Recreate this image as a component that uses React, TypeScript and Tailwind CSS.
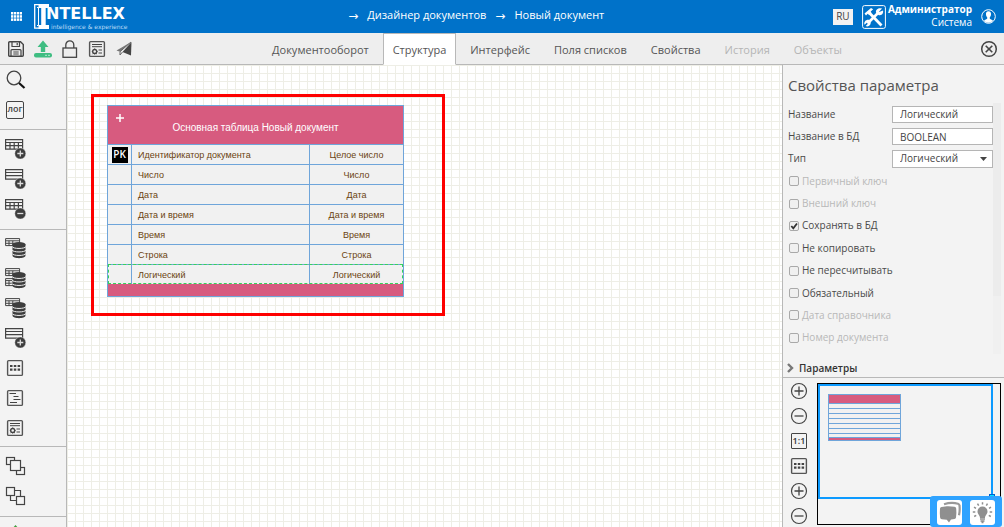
import React from 'react';

type IconProps = { className?: string; children: React.ReactNode; size?: number };

const Icon: React.FC<IconProps> = ({ className = '', children, size = 24 }) => (
  <svg
    width={size}
    height={size}
    viewBox={`0 0 ${size} ${size}`}
    fill="none"
    stroke="#444"
    strokeWidth="1.2"
    className={`block shrink-0 ${className}`}
    aria-hidden="true"
  >
    {children}
  </svg>
);

const IconButton: React.FC<{ label: string; className?: string; children: React.ReactNode }> = ({
  label,
  className = '',
  children,
}) => (
  <button type="button" aria-label={label} className={`flex items-center justify-center ${className}`}>
    {children}
  </button>
);

const SaveIcon = () => (
  <Icon size={18}>
    <path d="M1.7 2.7q0-1 1-1h10.8l2.8 2.8v10.8q0 1-1 1H2.7q-1 0-1-1z" strokeWidth="1.4" />
    <path d="M5 2v4.5h7.5V2M10.2 3v2.3M4 16v-5.5q0-.9.9-.9h8.2q.9 0 .9.9V16M6.3 12h5.4M6.3 14h5.4" />
  </Icon>
);

const UploadIcon = () => (
  <Icon size={18}>
    <path d="M9 .5 14.5 7h-3.3v5H6.8V7H3.5z" fill="#3fbd82" stroke="none" />
    <rect x="0" y="13" width="18" height="4.5" rx="2" fill="#3fbd82" stroke="none" />
    <path d="M11.5 15.3h1M14.5 15.3h1" stroke="#fff" />
  </Icon>
);

const LockIcon = () => (
  <Icon size={18}>
    <rect x="2" y="8" width="13.5" height="9.3" strokeWidth="1.3" />
    <path d="M4.8 8V5a4 4.2 0 0 1 8 0v3" strokeWidth="1.3" />
  </Icon>
);

const ReportIcon = () => (
  <Icon size={18}>
    <rect x="1.6" y="1.6" width="14.8" height="14.8" rx="1" stroke="#555" strokeWidth="1.4" />
    <path d="M4 4.5h10M4 6.7h10M10.5 10H14M10.5 13H14" strokeWidth="1" />
    <circle cx="6.7" cy="11.5" r="2" strokeWidth="1.4" />
    <path d="M3.8 11.5h1M8.6 11.5h1M6.7 8.5v1M6.7 13.5v1M4.5 14.2l.9-.9M9 14.2l-.9-.9" strokeWidth="1" />
  </Icon>
);

const SendIcon = () => (
  <Icon size={18}>
    <path d="M16 2 1.5 10.500l3.500 1.200z" fill="#777" stroke="none" />
    <path d="M16.500 2 7.500 12l8.500 3.500z" fill="#444" stroke="none" />
    <path d="M16 2 5 11.700V15l2.500-3" stroke="#666" strokeWidth="1" />
  </Icon>
);

const SearchIcon = () => (
  <Icon size={22}>
    <circle cx="10" cy="9" r="6.8" strokeWidth="1.3" />
    <path d="m15 14 5.500 5" stroke="#111" strokeWidth="2.2" />
  </Icon>
);

const TableIcon: React.FC<{ columns?: boolean; minus?: boolean }> = ({ columns, minus }) => (
  <Icon size={22}>
    <path d="M1.6 1.6h17v9.500h-17zM1.6 4.500h17M1.6 7.600h17" strokeWidth="1.2" />
    {columns && <path d="M6 4.500V11M10.200 4.500V11M14.400 4.500V11" strokeWidth="1.2" />}
    <circle cx="16.3" cy="15.5" r="5.500" fill="#3d3d3d" stroke="#f3f3f3" strokeWidth=".4" />
    <path d={minus ? 'M13.300 15.500h6' : 'M13.300 15.500h6M16.300 12.500v6'} stroke="#ddd" strokeWidth="1.3" />
  </Icon>
);

const DatabaseIcon: React.FC<{ double?: boolean }> = ({ double }) => (
  <Icon size={22}>
    <path d="M1.6 1.6h14v7h-14zM1.6 3.800h14M1.6 6.300h14M5 3.800v5M8.800 3.800v5" strokeWidth="1" />
    {double && <path d="M1.6 11.600h8v7h-8zM1.6 13.600h8M1.6 16.200h8M5 13.600v5" strokeWidth="1" />}
    <path d="M8.500 7.500v11c0 3.500 13 3.500 13 0v-11z" fill="#3d3d3d" stroke="none" />
    <ellipse cx="15" cy="7.500" rx="6.500" ry="2.500" fill="#3d3d3d" stroke="none" />
    <path
      d="M8 9.500c1 2.600 13 2.600 14 0M8 13c1 2.600 13 2.600 14 0M8 16.500c1 2.600 13 2.600 14 0"
      stroke="#ececec"
      strokeWidth="1"
    />
  </Icon>
);

const DotsIcon = () => (
  <Icon size={18}>
    <rect x="1.6" y="1.6" width="14.8" height="14.8" rx="1" stroke="#555" strokeWidth="1.4" />
    <path d="M4 7h2.500M7.800 7h2.500M11.600 7h2.500M4 10.700h2.500M7.800 10.700h2.500M11.600 10.700h2.500" strokeWidth="2.2" />
  </Icon>
);

const TreeIcon = () => (
  <Icon size={18}>
    <rect x="1.6" y="1.6" width="14.8" height="14.8" rx="1" stroke="#555" strokeWidth="1.4" />
    <path d="M3.500 4.500H10M7.500 7.500h5M7.500 10.500h7M4 13.500h7" />
  </Icon>
);

const FrontIcon = () => (
  <Icon size={22}>
    <rect x="2.5" y="2.5" width="8" height="7" />
    <rect x="12.5" y="12.5" width="8" height="7" />
    <rect x="6.5" y="5.5" width="10" height="10" fill="#f3f3f3" />
  </Icon>
);

const BackIcon = () => (
  <Icon size={22}>
    <path d="M10.500 5.500h6v6M6.500 11v4.500h6" />
    <rect x="2.5" y="2.5" width="8" height="8" />
    <rect x="12.5" y="11.5" width="8" height="8" />
  </Icon>
);

const ZoomIcon: React.FC<{ minus?: boolean }> = ({ minus }) => (
  <Icon size={18}>
    <circle cx="9" cy="9" r="7.5" />
    <path d={minus ? 'M4.500 9h9' : 'M4.500 9h9M9 4.500v9'} strokeWidth="1.3" />
  </Icon>
);

const breadcrumbs = ['Дизайнер документов', 'Новый документ'];

const tabs = [
  { title: 'Документооборот' },
  { title: 'Структура', active: true },
  { title: 'Интерфейс' },
  { title: 'Поля списков' },
  { title: 'Свойства' },
  { title: 'История', disabled: true },
  { title: 'Объекты', disabled: true },
];

const fields = [
  { name: 'Идентификатор документа', type: 'Целое число', pk: true },
  { name: 'Число', type: 'Число' },
  { name: 'Дата', type: 'Дата' },
  { name: 'Дата и время', type: 'Дата и время' },
  { name: 'Время', type: 'Время' },
  { name: 'Строка', type: 'Строка' },
  { name: 'Логический', type: 'Логический', selected: true },
];

const flags = [
  { title: 'Первичный ключ', disabled: true },
  { title: 'Внешний ключ', disabled: true },
  { title: 'Сохранять в БД', checked: true },
  { title: 'Не копировать' },
  { title: 'Не пересчитывать' },
  { title: 'Обязательный' },
  { title: 'Дата справочника', disabled: true },
  { title: 'Номер документа', disabled: true },
];

const Logo = () => (
  <a href="#" className="flex items-center text-white">
    <svg width="16" height="25" viewBox="0 0 16 25" fill="none" aria-hidden="true">
      <path d="M5 .7H.7v23.500H5" stroke="#fff" strokeWidth="1.3" />
      <path d="M3 3.500h1.500v18H3" stroke="#fff" strokeWidth="1" />
      <path d="M4.500 0H15v4h-3.300v17H15v4H4.500v-4h2.700V4H4.500z" fill="#fff" />
    </svg>
    <span className="flex flex-col items-end pt-px font-['DejaVu_Sans',sans-serif]">
      <span className="-ml-1 self-start text-[16px] leading-[18px] font-bold">NTELLEX</span>
      <span className="pl-px text-[6px] leading-[7px] text-[#b9daf5]">intelligence &amp; experience</span>
    </span>
  </a>
);

const Header = () => (
  <header className="flex h-[33px] shrink-0 items-center bg-[#0072c9] pr-2 text-white">
    <IconButton label="Меню" className="mr-3 ml-[11px]">
      <svg width="11" height="9" viewBox="0 0 11 9" fill="#fff">
        {[0, 3.2, 6.4].map((y) =>
          [0, 2.9, 5.8, 8.7].map((x) => <rect key={`${x}-${y}`} x={x} y={y} width="2.3" height="2.5" />),
        )}
      </svg>
    </IconButton>
    <Logo />
    <nav className="flex flex-1 items-center justify-center gap-[9px] pr-2 pb-[2px] text-[11px] font-medium">
      {breadcrumbs.map((item) => (
        <React.Fragment key={item}>
          <span className="font-['DejaVu_Sans'] text-[12px]">→</span>
          <a href="#">{item}</a>
        </React.Fragment>
      ))}
    </nav>
    <button type="button" className="mr-[9px] h-4 w-5 bg-[#f2f2f2] pb-[2px] text-[10px] leading-[12px] text-[#444]">
      RU
    </button>
    <IconButton label="Настройки" className="mr-[2px]">
      <svg width="24" height="24" viewBox="0 0 24 24" fill="none" stroke="#fff">
        <rect x=".6" y=".6" width="22.8" height="22.8" rx="2" />
        <path d="m7 7.500 12.500 13" strokeWidth="2.8" />
        <path d="M2.500 8.500 9 3l2.200 1.200-2.500 2.300.8 1.500-2.300 2-1.500-1.300-1.700 1.800z" fill="#fff" stroke="none" />
        <path d="M5.500 18.500 17 7" strokeWidth="2.6" />
        <path d="M20 3.500 17 6.800l.2.300L21 5.500c.8 3-1.500 5.500-4.500 4.500L14 7.500C13.500 4.500 16.500 2.500 20 3.500z" fill="#fff" stroke="none" />
        <path d="M8.500 16.500c1 3.500-2 5.800-4.800 4.600l2.400-2.600-1-1-2.600 2.200c-1-3 2-5.700 5-4.600z" fill="#fff" stroke="none" />
      </svg>
    </IconButton>
    <div className="mr-[9px] pb-[2px] text-right text-[10px] leading-[13px]">
      <div className="font-bold">Администратор</div>
      <div>Система</div>
    </div>
    <IconButton label="Профиль">
      <svg width="15" height="15" viewBox="0 0 15 15" fill="none">
        <circle cx="7.5" cy="7.5" r="6.8" stroke="#fff" />
        <path d="M7.500 2.300c2 0 2.700 1.300 2.500 3.200-.1 1.400-.7 2.200-1.200 2.800v1.500l3.200 1.700c-2.300 3-6.800 3-9 0l3.200-1.700V8.300C5.600 7.700 5.100 6.900 5 5.500c-.2-1.900.5-3.200 2.500-3.200z" fill="#fff" />
      </svg>
    </IconButton>
  </header>
);

const Toolbar = () => (
  <div className="flex h-8 shrink-0 items-stretch border-b border-[#b8b8b8] bg-[#eee] pr-[6px] pl-[7px]">
    <div className="flex items-center gap-[9px] pt-px">
      <IconButton label="Сохранить"><SaveIcon /></IconButton>
      <IconButton label="Выгрузить"><UploadIcon /></IconButton>
      <IconButton label="Блокировка"><LockIcon /></IconButton>
      <IconButton label="Отчёт"><ReportIcon /></IconButton>
      <IconButton label="Отправить"><SendIcon /></IconButton>
    </div>
    <nav className="-mb-px flex flex-1 justify-center gap-1 pl-px">
      {tabs.map((tab) => (
        <button
          key={tab.title}
          type="button"
          disabled={tab.disabled}
          className={`border px-[9px] pt-[2px] text-[11px] ${
            tab.active
              ? 'border-[#b8b8b8] border-b-white bg-white text-[#555]'
              : tab.disabled
                ? 'border-transparent text-[#b5b5b5]'
                : 'border-transparent text-[#555]'
          }`}
        >
          {tab.title}
        </button>
      ))}
    </nav>
    <IconButton label="Закрыть">
      <Icon size={18}>
        <circle cx="9" cy="9" r="7.3" strokeWidth="1.5" />
        <path d="m5.700 5.700 6.600 6.600M12.300 5.700l-6.600 6.600" strokeWidth="1.6" />
      </Icon>
    </IconButton>
  </div>
);

const Tool: React.FC<{ label: string; children: React.ReactNode }> = ({ label, children }) => (
  <IconButton label={label} className="h-[30px] w-[30px] shrink-0">
    {children}
  </IconButton>
);

const Sidebar = () => (
  <aside className="flex w-[67px] shrink-0 flex-col overflow-hidden border-r border-[#b8b8b8] bg-[#f3f3f3] *:shrink-0">
    <div className="border-b border-[#b8b8b8] pb-1">
      <Tool label="Поиск"><SearchIcon /></Tool>
      <button type="button" className="flex h-[30px] w-[30px] items-center justify-center">
        <span className="flex h-[18px] w-[18px] justify-center rounded-[2px] border border-[#444] text-[9px] leading-[14px] font-semibold text-[#444]">
          лог
        </span>
      </button>
    </div>
    <div className="border-b border-[#b8b8b8] pt-1 pb-[5px]">
      <Tool label="Добавить таблицу"><TableIcon columns /></Tool>
      <Tool label="Добавить строку"><TableIcon /></Tool>
      <Tool label="Удалить таблицу"><TableIcon columns minus /></Tool>
    </div>
    <div className="border-b border-[#b8b8b8] py-[3px]">
      <Tool label="База данных"><DatabaseIcon /></Tool>
      <Tool label="Базы данных"><DatabaseIcon double /></Tool>
      <Tool label="Таблица базы"><DatabaseIcon /></Tool>
      <Tool label="Добавить поле"><TableIcon /></Tool>
      <Tool label="Сетка"><DotsIcon /></Tool>
      <Tool label="Дерево"><TreeIcon /></Tool>
      <Tool label="Шаблон"><ReportIcon /></Tool>
    </div>
    <div className="border-b border-[#b8b8b8] pt-1 pb-[5px]">
      <Tool label="На передний план"><FrontIcon /></Tool>
      <Tool label="На задний план"><BackIcon /></Tool>
    </div>
    <div className="pt-2 pl-[11px]">
      <svg width="9" height="9" viewBox="0 0 9 9" aria-hidden="true">
        <path d="M4.500 0 9 5H0z" fill="#3f9d3f" />
      </svg>
    </div>
  </aside>
);

const DocumentTable = () => (
  <div className="absolute top-[40px] left-[40px] w-[297px] border border-[#6fa5da] bg-[#d75b7f] font-['Liberation_Sans',sans-serif]">
    <div className="flex h-[38px] px-2 pt-[6px] text-white">
      <IconButton label="Добавить поле" className="h-3 w-2">
        <svg width="8" height="8" viewBox="0 0 8 8" stroke="#fff" strokeWidth="1.5">
          <path d="M0 4h8M4 0v8" />
        </svg>
      </IconButton>
      <h2 className="flex-1 pt-[10px] pr-2 text-center text-[10px] leading-3">Основная таблица Новый документ</h2>
    </div>
    <table className="w-full table-fixed border-separate border-spacing-0 bg-[#f1f1f1] text-[9px] text-[#6b4310]">
      <colgroup>
        <col className="w-[23px]" />
        <col />
        <col className="w-[94px]" />
      </colgroup>
      <tbody>
        {fields.map((field) => (
          <tr
            key={field.name}
            className={`h-5 ${field.selected ? 'outline-1 -outline-offset-1 outline-[#35d35b] outline-dashed' : ''}`}
          >
            <td className="border-t border-[#6fa5da] p-0">
              {field.pk && (
                <span className="mx-auto block h-4 w-4 bg-black text-center font-['Open_Sans',sans-serif] text-[10px] leading-[15px] font-semibold text-white">
                  PK
                </span>
              )}
            </td>
            <td className="border-t border-l border-[#6fa5da] p-0 pt-[2px] pl-[6px]">{field.name}</td>
            <td className="border-t border-l border-[#6fa5da] p-0 pt-[2px] text-center">{field.type}</td>
          </tr>
        ))}
      </tbody>
    </table>
    <div className="h-3" />
  </div>
);

const Canvas = () => (
  <main className="relative min-w-0 flex-1 overflow-hidden bg-white bg-[linear-gradient(to_right,#eeeee6_1px,transparent_1px),linear-gradient(to_bottom,#eeeee6_1px,transparent_1px)] bg-[size:8px_8px]">
    <DocumentTable />
    <div className="pointer-events-none absolute top-[29px] left-[24px] h-[222px] w-[354px] border-[3px] border-[#fe0000]" />
  </main>
);

const inputClass = 'w-[101px] border border-[#b5b5b5] bg-white px-[7px] text-[10px] text-[#444]';

const PropertiesForm = () => (
  <form className="flex min-h-0 flex-1 pb-1 pl-[5px]">
    <div className="flex flex-1 flex-col pb-[5px] text-[10px] text-[#4a4a4a] *:flex-1">
      <div className="flex items-center justify-between">
        <label htmlFor="title">Название</label>
        <input id="title" defaultValue="Логический" className={`h-[17px] ${inputClass}`} />
      </div>
      <div className="flex items-center justify-between">
        <label htmlFor="column">Название в БД</label>
        <input id="column" defaultValue="BOOLEAN" className={`h-[17px] ${inputClass}`} />
      </div>
      <div className="flex items-center justify-between">
        <label htmlFor="type">Тип</label>
        <div className="relative">
          <select id="type" className={`block h-[18px] appearance-none ${inputClass}`}>
            <option>Логический</option>
          </select>
          <svg width="7" height="4" viewBox="0 0 7 4" className="pointer-events-none absolute top-[7px] right-[6px]">
            <path d="M0 0h7L3.500 4z" fill="#444" />
          </svg>
        </div>
      </div>
      {flags.map((flag) => (
        <label key={flag.title} className={`flex items-center gap-[3px] pl-px ${flag.disabled ? 'text-[#b8b8b8]' : ''}`}>
          <span className="relative">
            <input
              type="checkbox"
              defaultChecked={flag.checked}
              disabled={flag.disabled}
              className="peer block h-[10px] w-[10px] appearance-none rounded-[2px] border border-[#a9a9a9] bg-[#f0f0f0]"
            />
            <svg
              width="10"
              height="10"
              viewBox="0 0 10 10"
              fill="none"
              className="pointer-events-none absolute inset-0 hidden peer-checked:block"
            >
              <path d="M2.300 5 4.300 7.300 8 2.500" stroke="#333" strokeWidth="1.8" />
            </svg>
          </span>
          {flag.title}
        </label>
      ))}
    </div>
    <div className="mr-[3px] w-2 bg-[#f0f0f0]">
      <div className="h-[193px] bg-[#ececec]" />
    </div>
  </form>
);

const Minimap = () => (
  <div className="relative h-[142px] flex-1 border border-black">
    <div className="mr-[7px] h-[115px] border-2 border-[#0c9aff] pt-2 pl-2">
      <div className="h-[47px] w-[73px] border border-[#6fa5da] bg-[#f1f1f1]">
        <div className="h-[8px] bg-[#d75b7f]" />
        {fields.map((field) => (
          <div key={field.name} className="h-[5px] border-t border-[#6fa5da]" />
        ))}
        <div className="-mt-px h-[3px] border-t border-[#6fa5da] bg-[#d75b7f]" />
      </div>
    </div>
    <span className="absolute top-[110px] right-[5px] h-[6px] w-[6px] border border-[#0060d0] bg-[#00e5ff]" />
  </div>
);

const HelpWidget = () => (
  <div className="fixed right-[2px] bottom-0 flex h-[31px] w-[72px] items-start justify-center gap-2 rounded-[3px] bg-[#2fa3ff] pt-1">
    <IconButton label="Сообщения" className="h-[25px] w-[25px] rounded-[3px] bg-white">
      <svg width="23" height="23" viewBox="0 0 23 23" aria-hidden="true">
        <path d="M6 3.200c5-1.500 10-1.500 14-.5q1.500.5 1.500 2c.5 4 .3 6-.5 9.500" fill="none" stroke="#999" strokeWidth="2.2" />
        <path d="M3.500 6c5-1 8-1 13-.2q1.500.2 1.700 1.700.5 4.500-.2 9-.2 1.200-1.500 1.500l-3.500.6-2 2.900-2.200-2.700-5-.6q-1.500-.2-1.700-1.700-.5-4.500-.1-9Q2.200 6.200 3.500 6z" fill="#8f8f8f" />
      </svg>
    </IconButton>
    <IconButton label="Подсказки" className="h-[25px] w-[25px] rounded-[3px] bg-white">
      <svg width="23" height="23" viewBox="0 0 23 23" aria-hidden="true">
        <path d="M11.500 5.500a5 5 0 0 1 5 5c0 3-2.500 3.500-2.500 6.500H9c0-3-2.500-3.500-2.500-6.500a5 5 0 0 1 5-5z" fill="#8f8f8f" />
        <path d="M9 18h5M9.500 20h4M10.500 21.500h2" stroke="#8f8f8f" strokeWidth="1.3" />
        <path
          d="M11.500 1.200v2.300M6.500 2.600l1.200 2M16.500 2.600l-1.200 2M3 6.200l2 1.200M20 6.200l-2 1.200M1.800 11h2.500M21.200 11h-2.500M3.200 15.500l2-1.200M19.800 15.500l-2-1.200"
          stroke="#8f8f8f"
          strokeWidth="1.5"
        />
      </svg>
    </IconButton>
  </div>
);

const PropertiesPanel = () => (
  <aside className="flex w-[222px] shrink-0 flex-col border-l border-[#b8b8b8] bg-[#f3f3f3]">
    <h1 className="h-[38px] shrink-0 pt-1 pl-[5px] text-[15px] leading-8 text-[#555]">Свойства параметра</h1>
    <PropertiesForm />
    <button
      type="button"
      className="flex h-5 shrink-0 items-center gap-[5px] border-b border-[#b8b8b8] pt-px pl-1 text-[10px] font-semibold text-[#333]"
    >
      <svg width="7" height="10" viewBox="0 0 7 10" fill="none" aria-hidden="true">
        <path d="m1 1 4 4-4 4" stroke="#777" strokeWidth="2.4" />
      </svg>
      Параметры
    </button>
    <div className="flex h-[149px] shrink-0 pr-[3px] pt-[5px]">
      <div className="-mt-[5px] flex w-[34px] flex-col pr-[2px] *:h-[25px] *:shrink-0">
        <IconButton label="Увеличить"><ZoomIcon /></IconButton>
        <IconButton label="Уменьшить"><ZoomIcon minus /></IconButton>
        <button type="button" className="flex items-center justify-center">
          <span className="flex h-4 w-4 justify-center rounded-[1px] border border-[#444] text-[9px] leading-[13px] font-semibold text-[#333]">
            1:1
          </span>
        </button>
        <IconButton label="Сетка"><DotsIcon /></IconButton>
        <IconButton label="Крупнее"><ZoomIcon /></IconButton>
        <IconButton label="Мельче"><ZoomIcon minus /></IconButton>
      </div>
      <Minimap />
    </div>
  </aside>
);

const App: React.FC = () => (
  <div className="flex h-screen flex-col overflow-hidden bg-white font-['Open_Sans',sans-serif]">
    <Header />
    <Toolbar />
    <div className="flex min-h-0 flex-1">
      <Sidebar />
      <Canvas />
      <PropertiesPanel />
    </div>
    <HelpWidget />
  </div>
);

export default App;
